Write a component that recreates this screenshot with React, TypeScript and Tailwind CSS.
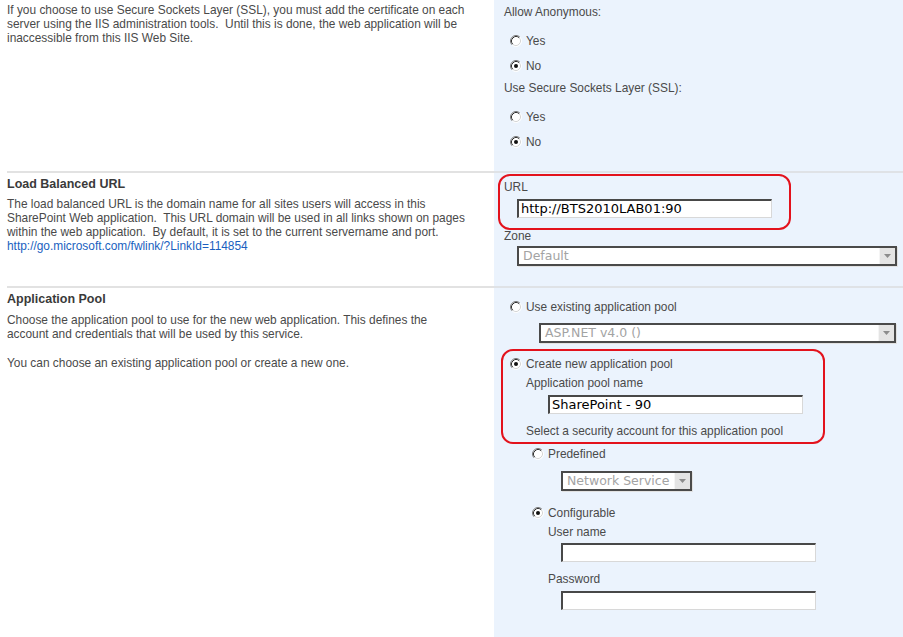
import type { ReactNode } from 'react';

function RadioDot({ checked }: { checked?: boolean }): JSX.Element {
    return (
        <svg width="12" height="12" viewBox="0 0 12 12" className="shrink-0">
            <circle cx="6" cy="6" r="5" fill="#ffffff" />
            <path d="M2.11 9.89 A5.5 5.5 0 0 1 9.89 2.11" fill="none" stroke="#7a7a7a" strokeWidth="1" />
            <path d="M2.82 9.18 A4.5 4.5 0 0 1 9.18 2.82" fill="none" stroke="#303030" strokeWidth="1" />
            <path d="M9.89 2.11 A5.5 5.5 0 0 1 2.11 9.89" fill="none" stroke="#ffffff" strokeWidth="1" />
            <path d="M9.18 2.82 A4.5 4.5 0 0 1 2.82 9.18" fill="none" stroke="#d6d6d6" strokeWidth="1" />
            {checked && <circle cx="6" cy="6" r="2" fill="#111111" />}
        </svg>
    );
}

function Radio({ label, checked, className }: { label: string; checked?: boolean; className?: string }): JSX.Element {
    return (
        <div className={`flex items-center gap-[4px] h-[14px] leading-[14px] ${className ?? ''}`}>
            <RadioDot checked={checked} />
            <span>{label}</span>
        </div>
    );
}

function TextBox({ value, className }: { value?: string; className?: string }): JSX.Element {
    return (
        <div
            className={`h-[19px] bg-white border-t-2 border-l-2 border-b border-r border-t-[#484848] border-l-[#484848] border-b-[#d8d8d8] border-r-[#d8d8d8] pl-[2px] flex items-center font-['DejaVu_Sans',Verdana,sans-serif] text-[13px] text-black whitespace-nowrap ${className ?? ''}`}
        >
            {value}
        </div>
    );
}

function Select({ value, className }: { value: string; className?: string }): JSX.Element {
    return (
        <div
            className={`h-[20px] bg-white border-2 border-[#4a4a4a] shadow-[1px_1px_0_#e2e2e2] flex items-stretch font-['DejaVu_Sans',Verdana,sans-serif] text-[12.5px] text-[#a3a3a3] ${className ?? ''}`}
        >
            <div className="flex-1 pl-[4px] flex items-center whitespace-nowrap overflow-hidden">{value}</div>
            <div className="w-[16px] bg-[#e4e4e4] border-l border-[#f5f5f5] flex items-center justify-center">
                <svg width="7" height="4" viewBox="0 0 7 4">
                    <path d="M0 0 H7 L3.5 4 Z" fill="#8c8c8c" />
                </svg>
            </div>
        </div>
    );
}

function Callout({ children, className }: { children: ReactNode; className: string }): JSX.Element {
    return (
        <div className="relative">
            {children}
            <div className={`absolute border-2 border-[#e3121c] rounded-[12px] pointer-events-none ${className}`} />
        </div>
    );
}

export default function App(): JSX.Element {
    return (
        <div className="w-[903px] h-[637px] overflow-hidden flex flex-col bg-white font-['Liberation_Sans',Arial,sans-serif] text-[11.9px] leading-[14px] text-[#4a4a4a]">
            {/* SSL */}
            <div className="flex h-[171px]">
                <div className="w-[494px] pl-[7px] pt-[3px]">
                    <p>
                        If you choose to use Secure Sockets Layer (SSL), you must add the certificate on each
                        <br />
                        server using the IIS administration tools.&nbsp; Until this is done, the web application will be
                        <br />
                        inaccessible from this IIS Web Site.
                    </p>
                </div>
                <div className="flex-1 bg-[#ebf3fd] pl-[10px] pt-[5px]">
                    <div>Allow Anonymous:</div>
                    <Radio className="mt-[15px] ml-[6px]" label="Yes" />
                    <Radio className="mt-[11px] ml-[6px]" label="No" checked />
                    <div className="mt-[8px]">Use Secure Sockets Layer (SSL):</div>
                    <Radio className="mt-[15px] ml-[6px]" label="Yes" />
                    <Radio className="mt-[11px] ml-[6px]" label="No" checked />
                </div>
            </div>

            {/* Load balanced URL */}
            <div className="flex h-[115px]">
                <div className="w-[494px] pl-[7px]">
                    <div className="border-t-2 border-[#e2e2e2] h-full pt-[4px]">
                        <h3 className="font-bold text-[12.5px] text-[#3a3a3a]">Load Balanced URL</h3>
                        <p className="mt-[6px]">
                            The load balanced URL is the domain name for all sites users will access in this
                            <br />
                            SharePoint Web application.&nbsp; This URL domain will be used in all links shown on pages
                            <br />
                            within the web application.&nbsp; By default, it is set to the current servername and port.
                            <br />
                            <a className="text-[#1a5fc0]">http://go.microsoft.com/fwlink/?LinkId=114854</a>
                        </p>
                    </div>
                </div>
                <div className="flex-1 bg-[#ebf3fd] border-t-2 border-[#dfe2e6] pl-[10px] pt-[7px]">
                    <Callout className="-left-[6px] -top-[6px] w-[293px] h-[56px]">
                        <div>URL</div>
                        <TextBox className="mt-[5px] ml-[13px] w-[255px]" value="http://BTS2010LAB01:90" />
                    </Callout>
                    <div className="mt-[11px]">Zone</div>
                    <Select className="mt-[3px] ml-[13px] w-[380px]" value="Default" />
                </div>
            </div>

            {/* Application pool */}
            <div className="flex flex-1">
                <div className="w-[494px] pl-[7px]">
                    <div className="border-t-2 border-[#e2e2e2] h-full pt-[4px]">
                        <h3 className="font-bold text-[12.5px] text-[#3a3a3a]">Application Pool</h3>
                        <p className="mt-[7px]">
                            Choose the application pool to use for the new web application. This defines the
                            <br />
                            account and credentials that will be used by this service.
                        </p>
                        <p className="mt-[15px]">You can choose an existing application pool or create a new one.</p>
                    </div>
                </div>
                <div className="flex-1 bg-[#ebf3fd] border-t-2 border-[#dfe2e6] pl-[10px] pt-[12px]">
                    <Radio className="ml-[6px]" label="Use existing application pool" />
                    <Select className="mt-[9px] ml-[35px] w-[357px]" value="ASP.NET v4.0 ()" />
                    <Callout className="-left-[3px] -top-[8px] w-[324px] h-[95px]">
                        <Radio className="mt-[14px] ml-[6px]" label="Create new application pool" checked />
                        <div className="mt-[5px] ml-[22px]">Application pool name</div>
                        <TextBox className="mt-[5px] ml-[44px] w-[255px]" value="SharePoint - 90" />
                        <div className="mt-[10px] ml-[22px]">Select a security account for this application pool</div>
                    </Callout>
                    <Radio className="mt-[9px] ml-[28px]" label="Predefined" />
                    <Select className="mt-[10px] ml-[57px] w-[131px] h-[19px]" value="Network Service" />
                    <Radio className="mt-[15px] ml-[28px]" label="Configurable" checked />
                    <div className="mt-[5px] ml-[44px]">User name</div>
                    <TextBox className="mt-[4px] ml-[57px] w-[255px]" />
                    <div className="mt-[10px] ml-[44px]">Password</div>
                    <TextBox className="mt-[5px] ml-[57px] w-[255px]" />
                </div>
            </div>
        </div>
    );
}
